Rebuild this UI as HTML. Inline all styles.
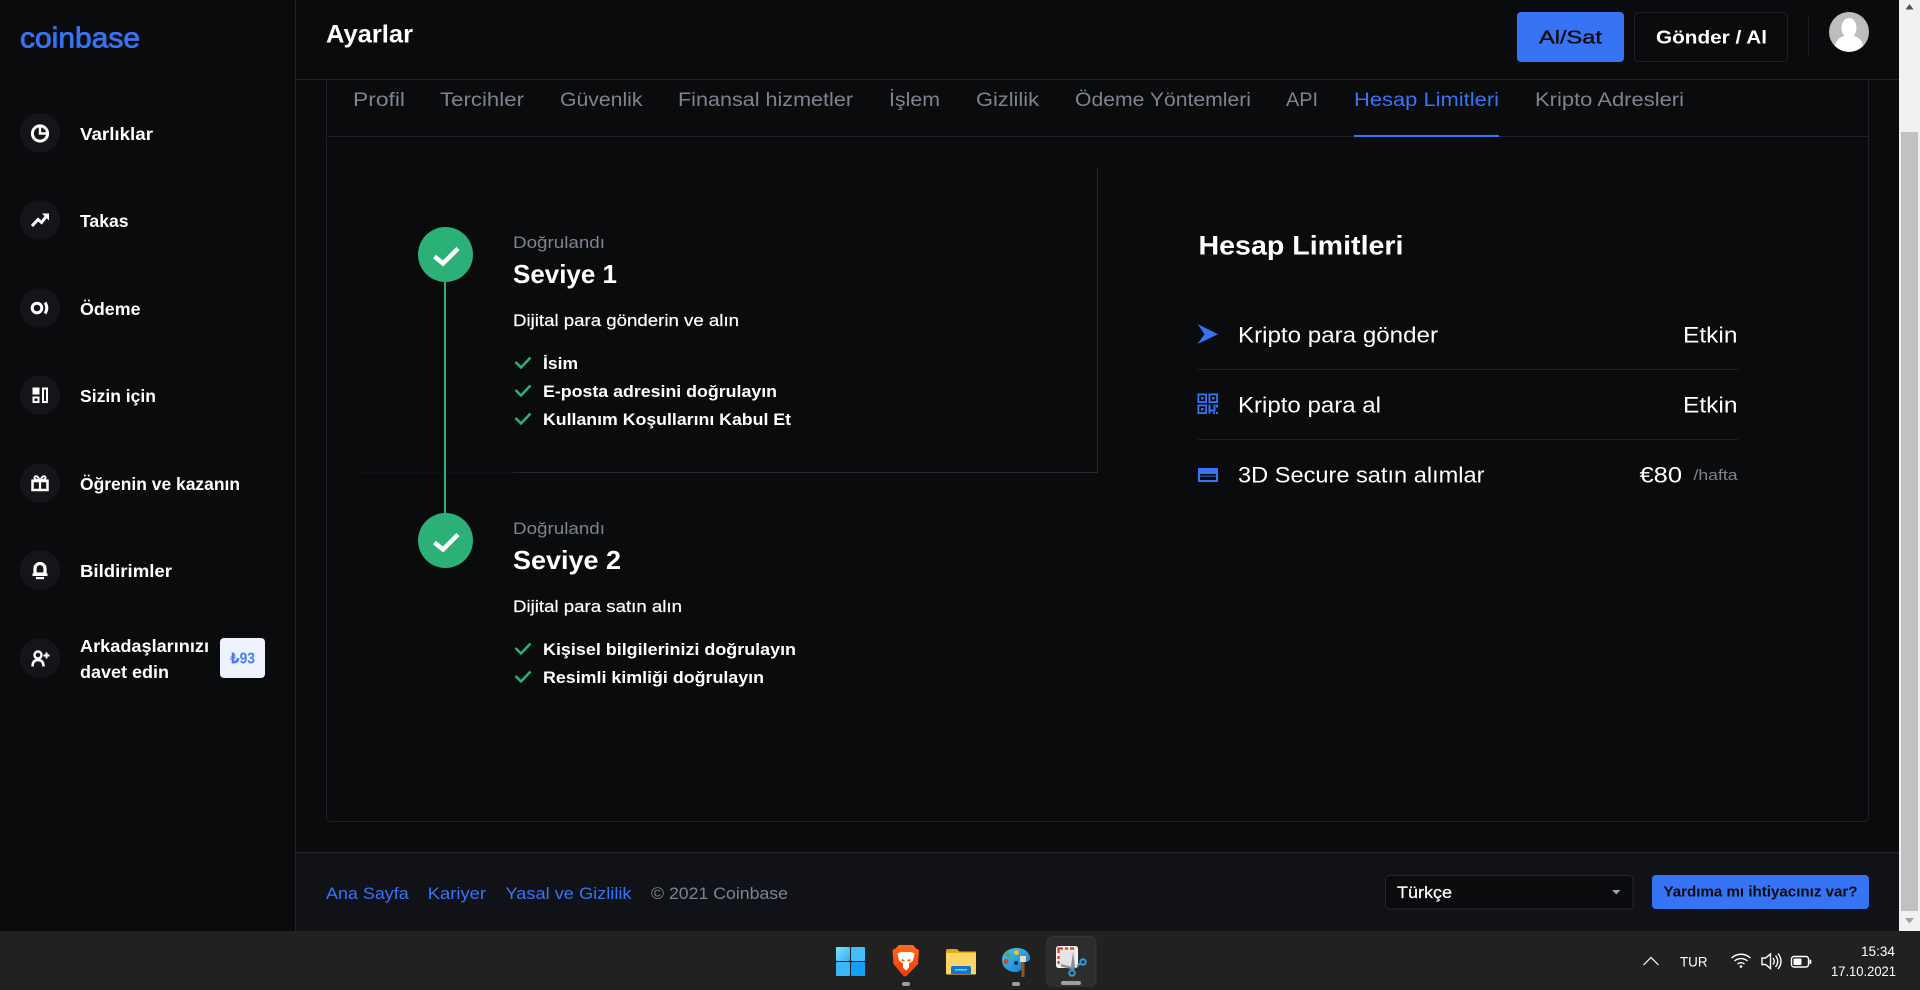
<!DOCTYPE html>
<html lang="tr">
<head>
<meta charset="utf-8">
<title>Coinbase - Ayarlar</title>
<style>
html,body{margin:0;padding:0;background:#0a0b0d;overflow:hidden;width:1920px;height:990px}
svg{position:absolute;left:0;top:0;display:block}
text{font-family:"Liberation Sans","DejaVu Sans",sans-serif;white-space:pre}
.nav{font-size:17.5px;font-weight:700;fill:#fff}
.tab{font-size:19px;fill:#7d838f}
.li{font-size:17px;font-weight:700;fill:#fff}
.row{font-size:22px;fill:#fff}
.ft{font-size:17px;fill:#3773f5}
.w{stroke:#fff;fill:none}
</style>
</head>
<body>
<svg width="1920" height="990" viewBox="0 0 1920 990" xmlns="http://www.w3.org/2000/svg">
<defs>
<linearGradient id="win" x1="0" y1="0" x2="1" y2="1"><stop offset="0" stop-color="#7fe3fb"/><stop offset="1" stop-color="#2fb0f6"/></linearGradient>
<linearGradient id="brv" x1="0" y1="0" x2="0" y2="1"><stop offset="0" stop-color="#ff6a1a"/><stop offset="1" stop-color="#f23a0c"/></linearGradient>
<linearGradient id="pal" x1="0" y1="0" x2="1" y2="1"><stop offset="0" stop-color="#4cc3f2"/><stop offset="1" stop-color="#0f78c8"/></linearGradient>
</defs>
<rect width="1920" height="990" fill="#0a0b0d"/>

<!-- sidebar -->
<rect x="295" y="0" width="1" height="931" fill="#222428"/>
<text x="20" y="47.5" font-size="29" fill="#3773f5" stroke="#3773f5" stroke-width=".8" textLength="120" lengthAdjust="spacingAndGlyphs">coinbase</text>

<g fill="#141519">
<circle cx="40" cy="133" r="20"/><circle cx="40" cy="220" r="20"/><circle cx="40" cy="308" r="20"/><circle cx="40" cy="395" r="20"/><circle cx="40" cy="483" r="20"/><circle cx="40" cy="570" r="20"/><circle cx="40" cy="658" r="20"/>
</g>
<!-- sidebar icons -->
<circle class="w" cx="40" cy="133.5" r="7.6" stroke-width="3"/>
<path class="w" d="M40 127V133.5H47.5" stroke-width="2.4"/>
<path class="w" d="M32 226l6-6.5 3.5 3L47 215.5" stroke-width="3"/>
<path d="M42 213.5h7v7z" fill="#fff"/>
<circle class="w" cx="37" cy="308" r="4.8" stroke-width="3"/>
<path class="w" d="M45 302.5q3.600 5.500 0 11" stroke-width="3"/>
<rect x="32.500" y="387.500" width="7" height="7" fill="#fff"/>
<rect x="33.500" y="397.500" width="5" height="4.500" class="w" stroke-width="2"/>
<rect x="43" y="388.500" width="4" height="13.500" class="w" stroke-width="2"/>
<rect x="32.500" y="481" width="15" height="9" class="w" stroke-width="2.500"/>
<path class="w" d="M40 480V490M31.500 480.500H48.500" stroke-width="2.200"/>
<path class="w" d="M39.500 480c-1-3-3-4.500-4.500-3.500s-.5 3.500 4.500 3.500zM40.500 480c1-3 3-4.500 4.500-3.500s.5 3.500-4.500 3.500z" stroke-width="1.800"/>
<path d="M35 574V568.500a5 5 0 0 1 10 0V574z" class="w" stroke-width="3.200"/>
<rect x="32.500" y="573.500" width="15" height="2.500" fill="#fff"/>
<rect x="36" y="577" width="8" height="2.200" fill="#fff"/>
<circle class="w" cx="38" cy="655" r="3.500" stroke-width="2.400"/>
<path class="w" d="M32.500 666.500c0-5 2.500-6.500 5.500-6.500s5.500 1.500 5.500 6.500" stroke-width="2.400"/>
<path class="w" d="M46.500 652.500v6M43.500 655.500h6" stroke-width="2"/>

<text class="nav" x="80" y="140" textLength="73" lengthAdjust="spacingAndGlyphs">Varlıklar</text>
<text class="nav" x="80" y="227" textLength="48.500" lengthAdjust="spacingAndGlyphs">Takas</text>
<text class="nav" x="80" y="315" textLength="60.500" lengthAdjust="spacingAndGlyphs">Ödeme</text>
<text class="nav" x="80" y="402" textLength="76" lengthAdjust="spacingAndGlyphs">Sizin için</text>
<text class="nav" x="80" y="490" textLength="160" lengthAdjust="spacingAndGlyphs">Öğrenin ve kazanın</text>
<text class="nav" x="80" y="577" textLength="92" lengthAdjust="spacingAndGlyphs">Bildirimler</text>
<text class="nav" x="80" y="652" textLength="129" lengthAdjust="spacingAndGlyphs">Arkadaşlarınızı</text>
<text class="nav" x="80" y="678" textLength="89" lengthAdjust="spacingAndGlyphs">davet edin</text>
<rect x="220" y="638" width="45" height="40" rx="4" fill="#eef2fe"/>
<text x="230" y="663.500" font-size="15.500" font-weight="700" fill="#4a7bf2" textLength="25" lengthAdjust="spacingAndGlyphs">₺93</text>

<!-- header -->
<rect x="296" y="79" width="1603" height="1" fill="#222428"/>
<text x="326" y="42.500" font-size="25" font-weight="700" fill="#fff" textLength="87" lengthAdjust="spacingAndGlyphs">Ayarlar</text>
<rect x="1517" y="12" width="107" height="50" rx="4" fill="#3773f5"/>
<text x="1539" y="43.500" font-size="18.500" fill="#0a0b0d" stroke="#0a0b0d" stroke-width=".35" textLength="63" lengthAdjust="spacingAndGlyphs">Al/Sat</text>
<rect x="1634.500" y="12.500" width="153" height="49" rx="4" fill="#0a0b0d" stroke="#1f2126"/>
<text x="1656" y="43.500" font-size="18.500" font-weight="700" fill="#fff" textLength="111" lengthAdjust="spacingAndGlyphs">Gönder / Al</text>
<rect x="1808" y="17" width="1" height="40" fill="#1c1e22"/>
<circle cx="1849" cy="32" r="20" fill="#bdbdbd"/>
<ellipse cx="1849" cy="28" rx="7.500" ry="10" fill="#fff"/>
<path d="M1835 46c1-7 6-9 9-10h10c3 1 8 3 9 10a20 20 0 0 1-28 0z" fill="#fff"/>

<!-- card -->
<path d="M326.500 80V816a5 5 0 0 0 5 5.500H1863.500a5 5 0 0 0 5-5.500V80" fill="none" stroke="#1f2125"/>
<rect x="327" y="136" width="1541" height="1" fill="#1f2125"/>
<rect x="1354" y="135" width="145" height="2" fill="#3773f5"/>

<text class="tab" x="353" y="106" textLength="52" lengthAdjust="spacingAndGlyphs">Profil</text>
<text class="tab" x="440" y="106" textLength="84" lengthAdjust="spacingAndGlyphs">Tercihler</text>
<text class="tab" x="560" y="106" textLength="82.500" lengthAdjust="spacingAndGlyphs">Güvenlik</text>
<text class="tab" x="678" y="106" textLength="175" lengthAdjust="spacingAndGlyphs">Finansal hizmetler</text>
<text class="tab" x="889" y="106" textLength="51" lengthAdjust="spacingAndGlyphs">İşlem</text>
<text class="tab" x="976" y="106" textLength="63" lengthAdjust="spacingAndGlyphs">Gizlilik</text>
<text class="tab" x="1075" y="106" textLength="176" lengthAdjust="spacingAndGlyphs">Ödeme Yöntemleri</text>
<text class="tab" x="1286" y="106" textLength="32" lengthAdjust="spacingAndGlyphs">API</text>
<text class="tab" x="1354" y="106" textLength="145" lengthAdjust="spacingAndGlyphs" style="fill:#3773f5">Hesap Limitleri</text>
<text class="tab" x="1535" y="106" textLength="149" lengthAdjust="spacingAndGlyphs">Kripto Adresleri</text>

<!-- level box -->
<rect x="1097" y="167" width="1" height="305" fill="#26282c"/>
<rect x="513" y="472" width="585" height="1" fill="#26282c"/>
<rect x="360" y="472" width="153" height="1" fill="#101114"/>

<rect x="444" y="280" width="2" height="235" fill="#2bb078"/>
<circle cx="445.500" cy="254.500" r="27.500" fill="#2bb078"/>
<path d="M434.500 256.500l8.500 7 15-15" fill="none" stroke="#fff" stroke-width="4.500"/>
<circle cx="445.500" cy="540.500" r="27.500" fill="#2bb078"/>
<path d="M434.500 542.500l8.500 7 15-15" fill="none" stroke="#fff" stroke-width="4.500"/>

<text x="513" y="248" font-size="16.500" fill="#7d838f" textLength="92" lengthAdjust="spacingAndGlyphs">Doğrulandı</text>
<text x="513" y="283" font-size="26" font-weight="700" fill="#fff" textLength="104" lengthAdjust="spacingAndGlyphs">Seviye 1</text>
<text x="513" y="326" font-size="17" fill="#fff" stroke="#fff" stroke-width=".2" textLength="226" lengthAdjust="spacingAndGlyphs">Dijital para gönderin ve alın</text>

<g fill="none" stroke="#2bb078" stroke-width="2.500">
<path d="M515.500 362l5.500 5.500 9.500-10"/>
<path d="M515.500 390l5.500 5.500 9.500-10"/>
<path d="M515.500 418l5.500 5.500 9.500-10"/>
<path d="M515.500 648l5.500 5.500 9.500-10"/>
<path d="M515.500 676l5.500 5.500 9.500-10"/>
</g>
<text class="li" x="543" y="369" textLength="35" lengthAdjust="spacingAndGlyphs">İsim</text>
<text class="li" x="543" y="397" textLength="234" lengthAdjust="spacingAndGlyphs">E-posta adresini doğrulayın</text>
<text class="li" x="543" y="425" textLength="248" lengthAdjust="spacingAndGlyphs">Kullanım Koşullarını Kabul Et</text>

<text x="513" y="534" font-size="16.500" fill="#7d838f" textLength="92" lengthAdjust="spacingAndGlyphs">Doğrulandı</text>
<text x="513" y="569" font-size="26" font-weight="700" fill="#fff" textLength="108" lengthAdjust="spacingAndGlyphs">Seviye 2</text>
<text x="513" y="612" font-size="17" fill="#fff" stroke="#fff" stroke-width=".2" textLength="169" lengthAdjust="spacingAndGlyphs">Dijital para satın alın</text>
<text class="li" x="543" y="655" textLength="253" lengthAdjust="spacingAndGlyphs">Kişisel bilgilerinizi doğrulayın</text>
<text class="li" x="543" y="683" textLength="221" lengthAdjust="spacingAndGlyphs">Resimli kimliği doğrulayın</text>

<!-- limits -->
<text x="1198.500" y="254.500" font-size="27" font-weight="700" fill="#fff" textLength="205" lengthAdjust="spacingAndGlyphs">Hesap Limitleri</text>

<path d="M1197.500 324L1218 334.300 1197.500 344 1204.500 334.300z" fill="#3773f5"/>
<text class="row" x="1238" y="342.500" textLength="200" lengthAdjust="spacingAndGlyphs">Kripto para gönder</text>
<text class="row" x="1683" y="342.500" textLength="54.500" lengthAdjust="spacingAndGlyphs">Etkin</text>
<rect x="1198" y="369" width="540" height="1" fill="#1f2125"/>

<g fill="none" stroke="#3773f5" stroke-width="1.800">
<rect x="1198.400" y="394.400" width="7.700" height="7.700"/>
<rect x="1209.400" y="394.400" width="7.700" height="7.700"/>
<rect x="1198.400" y="405.400" width="7.700" height="7.700"/>
</g>
<g fill="#3773f5">
<rect x="1201" y="397" width="2.500" height="2.500"/><rect x="1212" y="397" width="2.500" height="2.500"/><rect x="1201" y="408" width="2.500" height="2.500"/>
<path d="M1208.500 404.500h2v9h-2zM1210.500 409.500h3v-5h2v7h-5zM1216 404.500h2v3h-2zM1213 412h2v2h-2zM1216 412h2v2h-2z"/>
</g>
<text class="row" x="1238" y="412.500" textLength="143" lengthAdjust="spacingAndGlyphs">Kripto para al</text>
<text class="row" x="1683" y="412.500" textLength="54.500" lengthAdjust="spacingAndGlyphs">Etkin</text>
<rect x="1198" y="439" width="540" height="1" fill="#1f2125"/>

<rect x="1198" y="468" width="20" height="14" fill="#3773f5"/>
<rect x="1200" y="474" width="16" height="1.600" fill="#0a0b0d"/>
<rect x="1200" y="476.500" width="16" height="3.500" fill="#0a0b0d"/>
<text class="row" x="1238" y="482.500" textLength="246.500" lengthAdjust="spacingAndGlyphs">3D Secure satın alımlar</text>
<text class="row" x="1639.500" y="482.500" font-size="23" textLength="42.500" lengthAdjust="spacingAndGlyphs">€80</text>
<text x="1693.500" y="480" font-size="15" fill="#7d838f" textLength="44" lengthAdjust="spacingAndGlyphs">/hafta</text>

<!-- footer -->
<rect x="296" y="852" width="1603" height="79" fill="#101217"/>
<rect x="296" y="852" width="1603" height="1" fill="#26282c"/>
<text class="ft" x="326" y="899" textLength="82.700" lengthAdjust="spacingAndGlyphs">Ana Sayfa</text>
<text class="ft" x="427.800" y="899" textLength="58.200" lengthAdjust="spacingAndGlyphs">Kariyer</text>
<text class="ft" x="505.500" y="899" textLength="126" lengthAdjust="spacingAndGlyphs">Yasal ve Gizlilik</text>
<text x="651" y="899" font-size="17" fill="#7d838f" textLength="137" lengthAdjust="spacingAndGlyphs">© 2021 Coinbase</text>

<rect x="1385.500" y="875.500" width="247.500" height="33.500" rx="4" fill="#0a0b0d" stroke="#24262a"/>
<text x="1397" y="898" font-size="17" fill="#fff" stroke="#fff" stroke-width=".2" textLength="55" lengthAdjust="spacingAndGlyphs">Türkçe</text>
<path d="M1612 890h8.500l-4.250 4.500z" fill="#9aa0aa"/>
<rect x="1652" y="875" width="217" height="34" rx="4" fill="#3773f5"/>
<text x="1663.500" y="896.700" font-size="15" font-weight="700" fill="#0a0b0d" textLength="194" lengthAdjust="spacingAndGlyphs">Yardıma mı ihtiyacınız var?</text>

<!-- scrollbar -->
<rect x="1899" y="0" width="21" height="931" fill="#f1f1f1"/>
<rect x="1901" y="132" width="17" height="779" fill="#c1c1c1"/>
<path d="M1905.500 9.500h8l-4-5.500z" fill="#505050"/>
<path d="M1905 918h9l-4.500 5.500z" fill="#a3a3a3"/>

<!-- taskbar -->
<rect x="0" y="931" width="1920" height="59" fill="#212121"/>
<rect x="1046.500" y="936.500" width="49.500" height="49.500" rx="6" fill="#2d2d2d" stroke="#363636"/>

<!-- windows -->
<rect x="836" y="947" width="14" height="14" rx="1" fill="url(#win)"/>
<rect x="851" y="947" width="14" height="14" rx="1" fill="#45bef5"/>
<rect x="836" y="962" width="14" height="14" rx="1" fill="#3cb7f6"/>
<rect x="851" y="962" width="14" height="14" rx="1" fill="#129ff7"/>

<!-- brave -->
<path d="M899 945h14l3 3.500 3 1.500-1 14-11.500 12-1.500.5-1.500-.5L893.500 964l-1-14 3-1.500z" fill="url(#brv)"/>
<path d="M901 952h10l3.500 1.500-1.500 7-4 3v4l-3 3-3-3v-4l-4-3-1.500-7z" fill="#fff"/>
<path d="M902 959l2.500 1v1.500l-3-.5zM910 959l-2.500 1v1.500l3-.5z" fill="#f4500f"/>
<rect x="902" y="982" width="8" height="4" rx="2" fill="#9e9e9e"/>

<!-- folder -->
<path d="M946 951a2 2 0 0 1 2-2h9l3 3h-14z" fill="#e0a317"/>
<rect x="946" y="951.500" width="30" height="23" rx="1" fill="#fcd664"/>
<rect x="946" y="951.500" width="30" height="1.500" fill="#e8ab1b"/>
<path d="M951 974v-6a2 2 0 0 1 2-2h16a2 2 0 0 1 2 2v6z" fill="#1178cf"/>
<rect x="955" y="969" width="12" height="1.500" fill="#7dc3f2"/>

<!-- palette -->
<path d="M1017 948c8 0 13 5 13 10 0 4-4 4-6.500 4-2 0-2.500 2-2 4 .8 3-1 6-6 6-8 0-13.500-5-13.500-12 0-7 6-12 15-12z" fill="url(#pal)"/>
<circle cx="1016.500" cy="952.500" r="2.500" fill="#f4c020"/>
<circle cx="1008" cy="955" r="2.500" fill="#55a948"/>
<circle cx="1006" cy="961.500" r="2.500" fill="#c8492a"/>
<circle cx="1016" cy="963" r="2" fill="#0b2b44"/>
<rect x="1021.500" y="962" width="3" height="15" fill="#8a5a2b"/>
<rect x="1020" y="956" width="6" height="6" fill="#e9dcc2"/>
<rect x="1012" y="982" width="8" height="4" rx="2" fill="#9e9e9e"/>

<!-- snip -->
<rect x="1056" y="946" width="22" height="22" rx="2.500" fill="#f2f2f2"/>
<rect x="1058.500" y="948.500" width="17" height="17" fill="#e4e4e4"/>
<path d="M1058.500 953v-4.500h4.500M1065 948.500h3M1070 948.500h4M1058.500 956v3M1058.500 961v3" fill="none" stroke="#d0402c" stroke-width="2.200"/>
<path d="M1073 952l2 14-2 4-2-4zM1061 964l12 3 4 .5-4 2-12-3z" fill="#8a8f96"/>
<circle cx="1083" cy="962" r="2.800" fill="none" stroke="#2d9fd8" stroke-width="2"/>
<circle cx="1072" cy="973" r="2.800" fill="none" stroke="#2d9fd8" stroke-width="2"/>
<path d="M1077 966l4-3M1073 970.500v-3" stroke="#2d9fd8" stroke-width="1.800"/>
<rect x="1061" y="981" width="20" height="4" rx="2" fill="#9e9e9e"/>

<!-- tray -->
<path d="M1643.500 965l7.500-7.500 7.500 7.500" fill="none" stroke="#fff" stroke-width="1.200"/>
<text x="1680" y="966.500" font-size="14" fill="#fff" textLength="27.500" lengthAdjust="spacingAndGlyphs">TUR</text>
<g fill="none" stroke="#fff" stroke-width="1.400">
<path d="M1731.500 958c5.500-5 13.500-5 19 0"/>
<path d="M1734.500 961c3.800-3.300 9.200-3.300 13 0"/>
<path d="M1737.500 964c2-1.700 5-1.700 7 0"/>
<path d="M1762 958h3.500l5-4v14.500l-5-4H1762z"/>
<path d="M1773 958q2.500 3.200 0 6.500M1775.500 955.500q4.500 5.700 0 11.500M1778 953.500q6 7.700 0 15.500"/>
<rect x="1791.500" y="956.500" width="17" height="10.500" rx="2.500"/>
</g>
<circle cx="1741" cy="966.500" r="1.300" fill="#fff"/>
<rect x="1793.500" y="958.500" width="8" height="6.500" rx="1" fill="#fff"/>
<rect x="1809.500" y="959.500" width="1.800" height="4.500" rx=".8" fill="#fff"/>
<text x="1861" y="956" font-size="14" fill="#fff" textLength="34" lengthAdjust="spacingAndGlyphs">15:34</text>
<text x="1831" y="976" font-size="14" fill="#fff" textLength="65" lengthAdjust="spacingAndGlyphs">17.10.2021</text>
</svg>
</body>
</html>
